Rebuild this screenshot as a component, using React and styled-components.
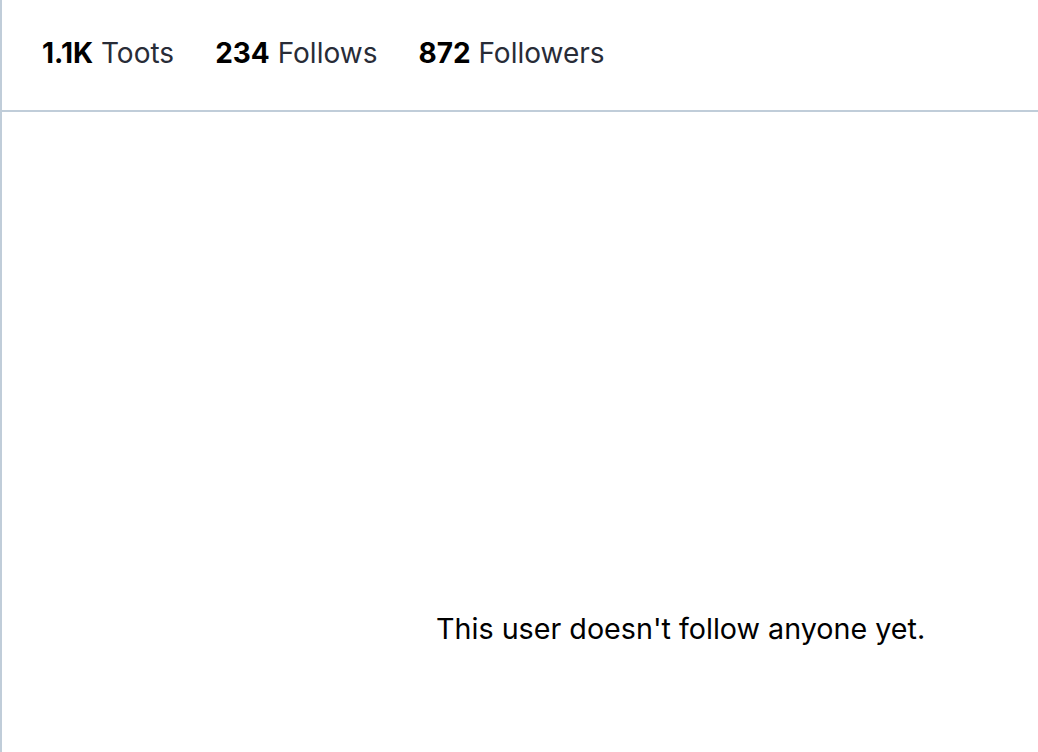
import React from 'react';
import styled, { createGlobalStyle } from 'styled-components';

const stats = [
    { value: '1.1K', label: 'Toots' },
    { value: '234', label: 'Follows' },
    { value: '872', label: 'Followers' },
];

const App = () => (
    <>
        <GlobalStyle />
        <Column>
            <StatsBar>
                {stats.map((s) => (
                    <StatLink key={s.label}>
                        <StatValue>{s.value}</StatValue> {s.label}
                    </StatLink>
                ))}
            </StatsBar>
            <EmptyArea>
                <EmptyMessage>This user doesn't follow anyone yet.</EmptyMessage>
            </EmptyArea>
        </Column>
    </>
);

// styles
const GlobalStyle = createGlobalStyle`
    html, body {
        margin: 0;
        padding: 0;
        background: #ffffff;
        overflow: hidden;
    }
    body {
        font-family: Inter, "Noto Sans", sans-serif;
    }
`;

const Column = styled.div`
    display: flex;
    flex-direction: column;
    height: 752px;
    border-left: 2px solid #c0cdd9;
    box-sizing: border-box;
`;

const StatsBar = styled.div`
    display: flex;
    align-items: center;
    gap: 41px;
    height: 112px;
    box-sizing: border-box;
    padding: 0 0 4px 40px;
    border-bottom: 2px solid #c0cdd9;
    flex-shrink: 0;
`;

const StatLink = styled.span`
    font-size: 28px;
    color: #282c37;
    white-space: nowrap;
`;

const StatValue = styled.strong`
    font-weight: 700;
    color: #000000;
`;

const EmptyArea = styled.div`
    flex: 1;
    display: flex;
    align-items: flex-start;
    padding: 499px 0 0 434px;
`;

const EmptyMessage = styled.p`
    margin: 0;
    font-size: 28.7px;
    color: #000000;
    white-space: nowrap;
`;

export default App;
